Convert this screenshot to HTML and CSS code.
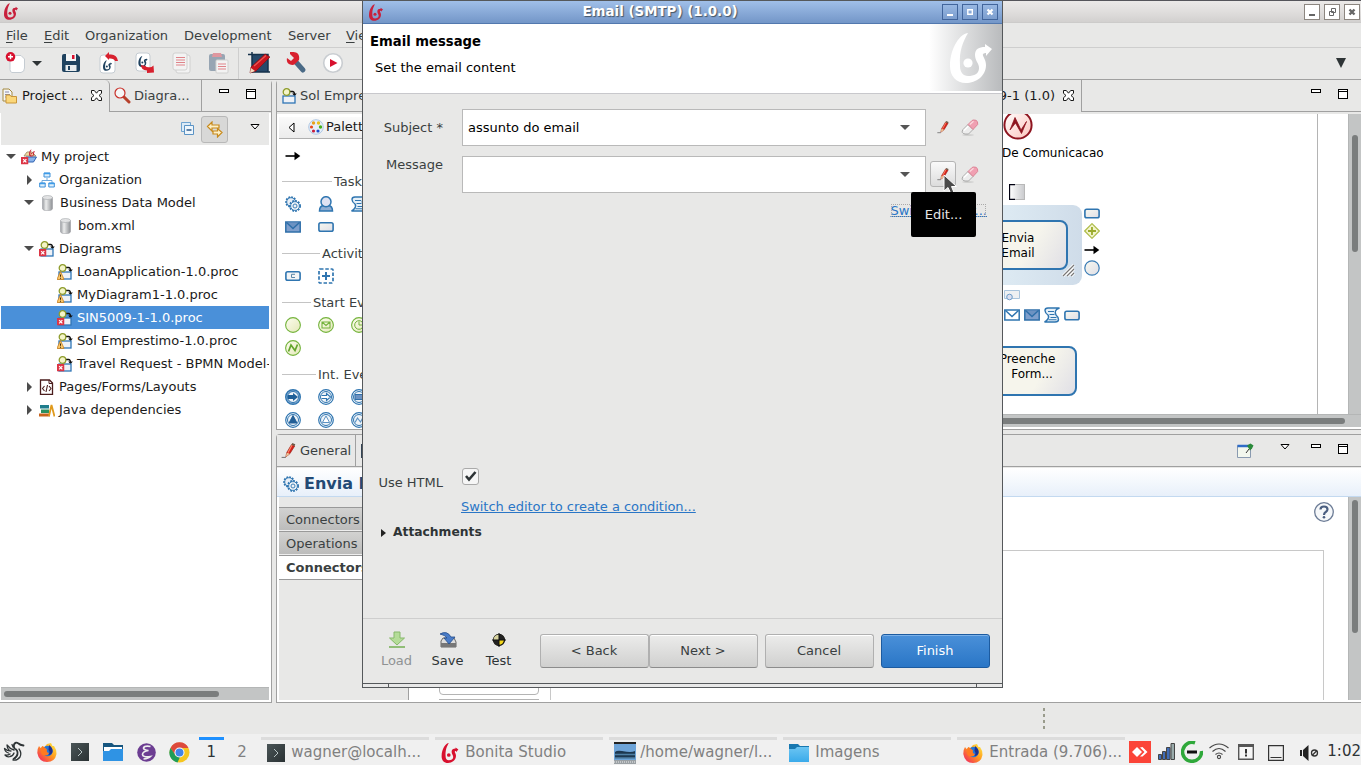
FILE: index.html
```html
<!DOCTYPE html>
<html lang="en">
<head>
<meta charset="utf-8">
<title>Bonita Studio</title>
<link rel="stylesheet" href="styles.css">
</head>
<body>
<svg class="defs" width="0" height="0">
  <defs>
    <linearGradient id="g-task" x1="0" y1="0" x2="1" y2="1"><stop offset="0" stop-color="#f8f8f0"/><stop offset="1" stop-color="#dedee6"/></linearGradient>
    <linearGradient id="g-green" x1="0" y1="0" x2="1" y2="1"><stop offset="0" stop-color="#fdfdf0"/><stop offset="1" stop-color="#e4e8b8"/></linearGradient>
    <linearGradient id="g-red" x1="0" y1="0" x2="1" y2="1"><stop offset="0" stop-color="#fff"/><stop offset="1" stop-color="#fbc4bc"/></linearGradient>
    <linearGradient id="g-cyl" x1="0" y1="0" x2="1" y2="0"><stop offset="0" stop-color="#9a9da1"/><stop offset=".35" stop-color="#eceded"/><stop offset="1" stop-color="#8d9094"/></linearGradient>
    <linearGradient id="g-term" x1="0" y1="0" x2="1" y2="1"><stop offset="0" stop-color="#4a5557"/><stop offset="1" stop-color="#2a3133"/></linearGradient>
    <linearGradient id="g-fox" x1="1" y1="0" x2="0" y2="1"><stop offset="0" stop-color="#fff44f"/><stop offset=".45" stop-color="#ff9a1c"/><stop offset="1" stop-color="#f0156a"/></linearGradient>
    <linearGradient id="g-folder" x1="0" y1="0" x2="0" y2="1"><stop offset="0" stop-color="#6cc5f2"/><stop offset="1" stop-color="#3aaaea"/></linearGradient>
  </defs>
  <symbol id="bonita" viewBox="0 0 42 50"><path fill="currentColor" d="M18 0C11 0 0 14 0 33c0 10 6 17 16 17s20-7 20-18c0-6-4-9-3-11 1-1 2-1 3-1v3l6-7-7-5v3c-6 0-10 2-10 8s4 8 4 13c0 6-5 8-11 8-5 0-8-4-8-10C9 17 13 9 18 0z"/><circle cx="18" cy="30" r="4.600" fill="currentColor"/></symbol>
  <symbol id="proc" viewBox="0 0 16 16"><path d="M9 3.500h2.500q2 0 2 3" fill="none" stroke="#111" stroke-width="1.300"/><path d="M11.200 5.500h4.600l-2.300 2.800z" fill="#111"/><rect x="2" y="8" width="12" height="7" fill="#eef1f6" stroke="#2f75b5" stroke-width="1.300"/><circle cx="5.500" cy="4" r="3.300" fill="#f4f4c8" stroke="#8d9b2a" stroke-width="1.300"/></symbol>
  <symbol id="err" viewBox="0 0 7 7"><rect width="7" height="7" fill="#dc3545"/><path d="M2 2l3 3M5 2l-3 3" stroke="#fff" stroke-width="1.200"/></symbol>
  <symbol id="warn" viewBox="0 0 7 8"><path d="M3.500.5L6.700 7.500H.3z" fill="#fbc96a" stroke="#c77a18" stroke-width=".7"/><path d="M3.500 3v2.200M3.500 6v.8" stroke="#3a2a10" stroke-width=".9"/></symbol>
  <symbol id="proc-err" viewBox="0 0 16 16"><use href="#proc" width="16" height="16"/><use href="#err" y="8" width="7.500" height="7.500"/></symbol>
  <symbol id="proc-warn" viewBox="0 0 16 16"><use href="#proc" width="16" height="16"/><use href="#warn" x="-.5" y="7" width="8" height="9"/></symbol>
  <symbol id="cyl" viewBox="0 0 16 16"><path d="M3 2.500v11c0 3 10 3 10 0v-11z" fill="url(#g-cyl)" stroke="#9da0a4" stroke-width=".6"/><ellipse cx="8" cy="2.500" rx="5" ry="2" fill="#e2e3e4" stroke="#a5a8ab" stroke-width=".6"/></symbol>
  <symbol id="gear" viewBox="0 0 16 16"><g fill="none" stroke="#2f75b0"><circle cx="6" cy="6" r="5" fill="#e9eff6" stroke-width="1.600" stroke-dasharray="1.800 1.100"/><circle cx="6" cy="6" r="4.300" stroke-width=".9"/><circle cx="10" cy="10" r="5.200" fill="#eef3f8" stroke-width="1.600" stroke-dasharray="1.800 1.200"/><circle cx="10" cy="10" r="4.400" stroke-width=".9"/><circle cx="10" cy="10" r="2" stroke-width=".9"/></g></symbol>
  <symbol id="user" viewBox="0 0 16 16"><path d="M1.500 15q0-5 4-5.500h5q4 .5 4 5.500z" fill="#8fadd2" stroke="#2f75b0" stroke-width="1.500"/><circle cx="8" cy="5.700" r="5" fill="#dfe2f2" stroke="#2f75b0" stroke-width="1.500"/></symbol>
  <symbol id="script" viewBox="0 0 16 16"><path d="M15.500 1H4Q1 1 1 3.500T4 8q1.500 2-.5 4.500-1 1.500-3 2.500H11q3.500 0 3.500-2.500T12 8Q9.500 3 15.500 1z" fill="#e6f0f8" stroke="#2f75b0" stroke-width="1.400"/><path d="M4 4.500h6M5.500 7.500h5M6.500 10.500h6M4.500 12.700h8" stroke="#2f75b0" stroke-width="1.100"/></symbol>
  <symbol id="mail-w" viewBox="0 0 16 12"><rect x=".8" y="1" width="14.400" height="10" fill="#fff" stroke="#2f75b0" stroke-width="1.500"/><path d="M1.500 1.500l6.500 6 6.500-6" fill="none" stroke="#2f75b0" stroke-width="1.500"/></symbol>
  <symbol id="mail-b" viewBox="0 0 16 12"><rect x=".8" y="1" width="14.400" height="10" fill="#7f9fcc" stroke="#2f6fa9" stroke-width="1.500"/><path d="M1.500 1.500l6.500 6 6.500-6" fill="#6c92c2" stroke="#2f6fa9" stroke-width="1.500"/></symbol>
  <symbol id="task" viewBox="0 0 16 11"><rect x=".9" y="1.200" width="14.200" height="8.500" rx="1.800" fill="url(#g-task)" stroke="#2f75b0" stroke-width="1.600"/></symbol>
  <symbol id="call" viewBox="0 0 16 11"><rect x=".9" y="1.200" width="14.200" height="8.500" rx="1.800" fill="#f2f4f6" stroke="#2f75b0" stroke-width="1.600"/><path d="M10 3.800H6.500v3.200H10" fill="none" stroke="#5b87a8"/></symbol>
  <symbol id="sub" viewBox="0 0 16 16"><rect x="1" y="1" width="14" height="14" rx="1" fill="#fff" stroke="#2f75b0" stroke-width="1.700" stroke-dasharray="3.500 1.800"/><path d="M8 4v8M4 8h8" stroke="#2f75b0" stroke-width="2"/></symbol>
  <symbol id="start" viewBox="0 0 16 16"><circle cx="8" cy="8" r="7.400" fill="url(#g-green)" stroke="#74b33c" stroke-width="1.100"/></symbol>
  <symbol id="start-mail" viewBox="0 0 16 16"><use href="#start"/><path d="M4 5h8v6H4zM4 5l4 3.500L12 5" fill="none" stroke="#74b33c" stroke-width="1.100"/></symbol>
  <symbol id="start-time" viewBox="0 0 16 16"><use href="#start"/><circle cx="8" cy="8" r="4.300" fill="none" stroke="#74b33c"/><path d="M8 4.500V8h4" fill="none" stroke="#74b33c"/></symbol>
  <symbol id="start-sig" viewBox="0 0 16 16"><use href="#start"/><path d="M3.500 11.500l2.500-6.500 4 5.500 2.500-6" fill="none" stroke="#63a52c" stroke-width="1.700"/></symbol>
  <symbol id="ring" viewBox="0 0 16 16"><circle cx="8" cy="8" r="7.300" fill="#fff" stroke="#2f75b0" stroke-width="1.200"/><circle cx="8" cy="8" r="5.500" fill="#eef3f8" stroke="#2f75b0"/></symbol>
  <symbol id="int-fill" viewBox="0 0 16 16"><circle cx="8" cy="8" r="7.300" fill="#8db0d2" stroke="#2f75b0" stroke-width="1.400"/><circle cx="8" cy="8" r="5.500" fill="#eef3f8" stroke="#2f75b0"/><path d="M3 6h5V4l5 4-5 4v-2H3z" fill="#1e5f98"/></symbol>
  <symbol id="int-line" viewBox="0 0 16 16"><use href="#ring"/><path d="M3.500 6.500h5v-2L12.500 8l-4 3.500v-2h-5" fill="#fff" stroke="#2f75b0" stroke-width="1.100"/></symbol>
  <symbol id="int-mail" viewBox="0 0 16 16"><use href="#ring"/><path d="M4 5.500h8v5H4z" fill="#6c92c2" stroke="#2f6fa9"/></symbol>
  <symbol id="int-tri" viewBox="0 0 16 16"><use href="#ring"/><path d="M8 3.500l4 7.500H4z" fill="#235f96" stroke="#235f96"/></symbol>
  <symbol id="int-tri2" viewBox="0 0 16 16"><use href="#ring"/><path d="M8 4l3.600 6.500H4.400z" fill="#fff" stroke="#5c92c2"/></symbol>
  <symbol id="int-sig" viewBox="0 0 16 16"><use href="#ring"/><path d="M4 10.500L6.500 6l3 4L12 5.500" fill="none" stroke="#5c92c2" stroke-width="1.200"/></symbol>
  <symbol id="arrow" viewBox="0 0 16 10"><path d="M.5 5h10" stroke="#000" stroke-width="1.600"/><path d="M9.500.8L15.300 5l-5.800 4.200z"/></symbol>
  <symbol id="xclose" viewBox="0 0 11 11"><path d="M.5.5h2.800l2.200 2.700L7.700.5h2.800v2.800L8 5.500l2.500 2.200v2.800H7.700L5.500 7.800l-2.200 2.700H.5V7.700L3 5.500.5 3.300z" fill="#fff" stroke="#000" stroke-width=".9"/></symbol>
  <symbol id="vmin" viewBox="0 0 10 4"><rect x=".5" y=".5" width="9" height="3" fill="#fff" stroke="#000"/></symbol>
  <symbol id="vmax" viewBox="0 0 10 10"><rect x=".5" y=".5" width="9" height="9" fill="#fff" stroke="#000"/><path d="M0 2.500h10" stroke="#000"/></symbol>
  <symbol id="vmenu" viewBox="0 0 10 6"><path d="M1 .5h8L5 5z" fill="#fff" stroke="#000"/></symbol>
  <symbol id="pencil" viewBox="0 0 16 16"><path d="M1.500 14.500h4" stroke="#777" stroke-width="1"/><path d="M5.500 14l.8-4L10.800 2.500l3 1.300L9.300 11z" fill="#d8201c" stroke="#8e1d12" stroke-width=".6"/><path d="M7.500 10l4-7.300" stroke="#ff8a68" stroke-width="1"/><path d="M5.500 14l.8-4 3 1z" fill="#ecc99a"/><path d="M10.800 2.500l.8-1.500 2.800 1.200-.7 1.600z" fill="#6e5a48"/></symbol>
  <symbol id="eraser" viewBox="0 0 18 17"><ellipse cx="7" cy="16" rx="6" ry=".8" fill="#c9c9c8"/><path d="M2 10.500L7 5.500l5 5-4.500 4.500H4Q-.5 14 2 10.500z" fill="#ededed" stroke="#999" stroke-width=".8"/><path d="M7 5.500l4-4q1-1 4-.2 2.200.9 1.700 4.200L12 10.500z" fill="#f0a0b2" stroke="#d8788c" stroke-width=".8"/><path d="M8.800 5.500L12.500 2.200" stroke="#fbd8de" stroke-width="1.300"/><path d="M3 11.500l4.200-4.200" stroke="#fff" stroke-width="1.500"/></symbol>
  <symbol id="fox" viewBox="0 0 20 20"><path d="M2 4l1.500 2L6 4l1 1.500L10 2l4-1 1.500 3L17 4q3 4 2.500 8-1.500 8-9.500 8T.3 11Q0 7 2 4z" fill="url(#g-fox)"/><circle cx="10.500" cy="9" r="5.200" fill="#2277d8"/><path d="M5 4q3 1 5 3.500-1 3 2 3.500-1 3-4.500 2.500T4 9.500z" fill="#ff7a20"/><path d="M12 3q4 3 3.500 7-1 3-4 3 2-3 0-5z" fill="#20308f"/></symbol>
  <symbol id="term" viewBox="0 0 18 18"><rect width="18" height="18" fill="url(#g-term)"/><path d="M7 5l4 4-4 4" fill="none" stroke="#b8c4c4"/></symbol>
</svg>

<div class="desktop">
  <div class="main-window">
    <div class="titlebar">
      <svg class="app-logo" width="14" height="17"><use href="#bonita"/></svg>
      <div class="win-buttons">
        <span class="wb"><svg width="14" height="14"><path d="M4 9h6v2H4z" fill="#666"/></svg></span>
        <span class="wb"><svg width="14" height="14" fill="none" stroke="#666"><path d="M6.500 3.500h4v4h-4zM4.500 6.500h4v4h-4z"/></svg></span>
        <span class="wb"><svg width="14" height="14"><path d="M4.500 4.500l5 5M9.500 4.500l-5 5" stroke="#666" stroke-width="2.400"/></svg></span>
      </div>
    </div>
    <div class="menubar"><span class="m1"><u>F</u>ile</span><span class="m2"><u>E</u>dit</span><span class="m3">Organization</span><span class="m4">Development</span><span class="m5">Server</span><span><u>V</u>ie</span></div>
    <div class="toolbar">
      <span class="tb-new"><svg width="22" height="22"><path d="M5 3.500h11l3.500 3.500v9q0 4-3.500 4.500H7q-2-.5-2-3z" fill="#fff" stroke="#c5ccd2"/><circle cx="5.500" cy="4.800" r="4.800" fill="#d8102e"/><path d="M5.500 2.300v5M3 4.800h5" stroke="#fff" stroke-width="1.500"/></svg><svg width="10" height="5"><path d="M0 0h10L5 5z" fill="#2e3436"/></svg></span>
      <span class="tb"><svg width="20" height="20"><path d="M1 3q0-2 2-2h13l3 3v13q0 2-2 2H3q-2 0-2-2z" fill="#1f425f"/><path d="M5 1h10v7H5z" fill="#f3f5f6"/><path d="M11 2h2.500v4H11z" fill="#d8102e"/><path d="M4.500 12h11v6h-11z" fill="#e8ecee"/><path d="M7 13h2v4H7z" fill="#1f425f"/></svg></span>
      <span class="tb"><svg width="22" height="22"><rect x="3" y="3" width="15" height="18" rx="3" fill="#fff" stroke="#c5ccd2"/><svg x="6" y="8" width="9" height="11" color="#1f425f"><use href="#bonita"/></svg><path d="M8 4l4-4v2.500q8-1 9 6.500h-3q-1-3-6-2.500V8z" fill="#d8202e"/></svg></span>
      <span class="tb"><svg width="22" height="22"><rect x="2" y="1" width="14" height="18" rx="3" fill="#fff" stroke="#c5ccd2"/><svg x="4" y="4" width="10" height="11" color="#1f425f"><use href="#bonita"/></svg><path d="M7 13q0 5 6 5.500V21l7-.5-.5-7-2 1.500q-5 1-6-1z" fill="#d8202e"/></svg></span>
      <span class="tb faded"><svg width="22" height="22"><rect x="5" y="3" width="14" height="18" rx="2" fill="#fff" stroke="#bbb"/><rect x="2" y="1" width="14" height="17" rx="2" fill="#fff" stroke="#bbb"/><path d="M5 5.500h9M5 8h9M5 10.500h9M5 13h9" stroke="#d8202e"/></svg></span>
      <span class="tb faded"><svg width="22" height="22"><rect x="1" y="2" width="16" height="17" rx="2" fill="#486580"/><path d="M5 1h8l1 4H4z" fill="#d8485a"/><rect x="8" y="8" width="12" height="13" rx="1" fill="#fff" stroke="#bbb"/><path d="M10 12h8M10 14.500h8M10 17h8" stroke="#d8202e"/></svg></span>
      <span class="tb-sep"></span>
      <span class="tb wide"><svg width="23" height="22"><path d="M4 2h16v18H4z" fill="#27496a"/><path d="M4 0v20h18M0 2.500h20v18" fill="none" stroke="#16324c" stroke-width="1.500"/><path d="M2 21l1-6L17 2l5 3L8 19z" fill="#c8141e" stroke="#7d0d12" stroke-width=".6"/><path d="M6 14L18 3.500" stroke="#ea5a54" stroke-width="1.200"/><path d="M2 21l1-5 4 3z" fill="#f1dcc0"/></svg></span>
      <span class="tb"><svg width="22" height="22"><path d="M10 9l8 9" stroke="#4a6a86" stroke-width="5" stroke-linecap="round"/><path d="M5 2l4 4-3 3-4-3q-1 5 3 6.500 3 1 5-.5l4-4q1-6-3-7.500-4-1-6-.5z" fill="#d8202e"/></svg></span>
      <span class="tb"><svg width="22" height="22"><circle cx="11" cy="11" r="9.300" fill="#fff" stroke="#c9cdd1" stroke-width="1.600"/><path d="M8 7v8l7.500-4z" fill="#d8102e"/></svg></span>
      <svg class="tb-more" width="10" height="10"><path d="M0 0h10L5 10z" fill="#2e3436"/></svg>
    </div>

    <div class="workbench">
      <section class="panel explorer">
        <div class="tabs">
          <div class="tab tab-project"><svg width="16" height="16"><path d="M2 1h6l3 3v9H2z" fill="#f4f6f8" stroke="#a58a40"/><path d="M4 4h4M4 6.500h5M4 9h3" stroke="#88a"/><path d="M5 7h4l1 1.500h5.500V15H5z" fill="#fbd77a" stroke="#c8963a"/></svg><span>Project ...</span><svg class="x" width="11" height="11"><use href="#xclose"/></svg></div>
          <div class="tab tab-search"><svg width="17" height="17"><path d="M9 9l6 6" stroke="#b7412c" stroke-width="3" stroke-linecap="round"/><circle cx="6" cy="6" r="5" fill="#f5f6f6" stroke="#c8312a" stroke-width="1.200"/></svg><span>Diagra...</span></div>
          <div class="tab-rest"><svg width="10" height="4"><use href="#vmin"/></svg><svg width="10" height="10"><use href="#vmax"/></svg></div>
        </div>
        <div class="view-tools">
          <svg width="14" height="14"><path d="M.5.5h9v9h-9z" fill="#dcebf7" stroke="#6ea3d0"/><path d="M3.500 3.500h9v9h-9z" fill="#eef6fc" stroke="#5b93c4"/><path d="M5.500 8h5" stroke="#1d4f86" stroke-width="1.400"/></svg>
          <span class="toggle"><svg width="18" height="17"><path d="M1.500 5.500L6 1v3h7v3H6v3zM16 11.500L11.500 7.500v2.500H7v3h4.500v3z" fill="#fdf0c8" stroke="#c88a1c" stroke-width="1.200"/></svg></span>
          <svg class="vm" width="10" height="6"><use href="#vmenu"/></svg>
        </div>
        <div class="tree">
          <div class="row"><i class="open"></i><svg width="16" height="16"><path d="M3 7l3-4h5l4 4z" fill="#f2d6a0" stroke="#a97"/><path d="M5 8h10.500l-3 5H4z" fill="#8ab4ec" stroke="#2f62b0"/><svg x="8" y="0" width="6" height="8" color="#c8243a"><use href="#bonita"/></svg><use href="#err" y="8" width="7.500" height="7.500"/></svg><span>My project</span></div>
          <div class="row l1"><i class="shut"></i><svg width="16" height="16"><path d="M8 6v3M3 11V8.500h10V11" fill="none" stroke="#6fa8dc"/><g fill="#dff0fc" stroke="#3d8fd8"><path d="M5 1h6v4H5zM.700 11h5.500v4H.7zM9.800 11h5.500v4H9.800z"/></g><path d="M5 1.500h6M.7 11.500h5.500M9.800 11.500h5.500" stroke="#3d9be8" stroke-width="1.500"/></svg><span>Organization</span></div>
          <div class="row l1"><i class="open"></i><svg width="17" height="16"><use href="#cyl"/></svg><span>Business Data Model</span></div>
          <div class="row l2"><i></i><svg width="17" height="16"><use href="#cyl"/></svg><span>bom.xml</span></div>
          <div class="row l1"><i class="open"></i><svg width="16" height="16"><use href="#proc-err"/></svg><span>Diagrams</span></div>
          <div class="row l2"><i></i><svg width="16" height="16"><use href="#proc-warn"/></svg><span>LoanApplication-1.0.proc</span></div>
          <div class="row l2"><i></i><svg width="16" height="16"><use href="#proc-warn"/></svg><span>MyDiagram1-1.0.proc</span></div>
          <div class="row l2 selected"><i></i><svg width="16" height="16"><use href="#proc-err"/></svg><span>SIN5009-1-1.0.proc</span></div>
          <div class="row l2"><i></i><svg width="16" height="16"><use href="#proc-warn"/></svg><span>Sol Emprestimo-1.0.proc</span></div>
          <div class="row l2"><i></i><svg width="16" height="16"><use href="#proc-err"/></svg><span>Travel Request - BPMN Model-</span></div>
          <div class="row l1"><i class="shut"></i><svg width="16" height="16"><path d="M1.500 1h9l3 3v11.500h-12z" fill="#fff" stroke="#4a1c1c" stroke-width="1.300"/><path d="M10 1v3.500h4" fill="none" stroke="#4a1c1c"/><path d="M5.500 7L3.500 9.500l2 2.500M10 7l2 2.500-2 2.500M8.500 6L7 13" fill="none" stroke="#4a1c1c" stroke-width="1.100"/></svg><span>Pages/Forms/Layouts</span></div>
          <div class="row l1"><i class="shut"></i><svg width="16" height="16"><path d="M1 3h9v3.500H1z" fill="#1f7d8c"/><path d="M2 7.500h8V11H2z" fill="#2a8f5f"/><path d="M0 11.500h11v3H0z" fill="#c8641e"/><path d="M10 14l2.500-11 3 11.500" fill="none" stroke="#e09a1c" stroke-width="1.800"/></svg><span>Java dependencies</span></div>
        </div>
        <div class="hscroll"><b></b></div>
      </section>

      <div class="right-col">
        <section class="panel editor">
          <div class="tabs">
            <div class="tab tab-sol"><svg width="16" height="16"><use href="#proc"/></svg><span>Sol Empre</span></div>
            <div class="tab tab-active"><span>SIN5009-1 (1.0)</span><svg class="x" width="11" height="11"><use href="#xclose"/></svg></div>
            <div class="tab-rest"><svg width="10" height="4"><use href="#vmin"/></svg><svg width="10" height="10"><use href="#vmax"/></svg></div>
          </div>
          <div class="editor-body">
            <div class="palette">
              <div class="pal-head"><span class="back"><svg width="7" height="11"><path d="M6 1v9L1 5.500z" fill="#fff" stroke="#000"/></svg></span><svg width="16" height="16"><circle cx="8" cy="8" r="7.300" fill="#e6effa" stroke="#b0c8e4"/><circle cx="5.500" cy="4" r="1.700" fill="#e8a21c"/><circle cx="10.500" cy="4" r="1.700" fill="#e8c01c"/><circle cx="3.500" cy="8" r="1.600" fill="#e84a1c"/><circle cx="12.500" cy="8" r="1.700" fill="#45b01c"/><circle cx="5.500" cy="12" r="1.600" fill="#c81c3a"/><circle cx="10" cy="12" r="1.600" fill="#1c4ac8"/></svg><span>Palette</span></div>
              <div class="pal-arrow"><svg width="16" height="10"><use href="#arrow"/></svg></div>
              <div class="pal-group g-tasks">Tasks</div>
              <div class="pal-items"><svg><use href="#gear"/></svg><svg><use href="#user"/></svg><svg><use href="#script"/></svg><svg><use href="#mail-b"/></svg><svg><use href="#task"/></svg></div>
              <div class="pal-group g-act">Activities</div>
              <div class="pal-items"><svg><use href="#call"/></svg><svg><use href="#sub"/></svg></div>
              <div class="pal-group g-start">Start Events</div>
              <div class="pal-items"><svg><use href="#start"/></svg><svg><use href="#start-mail"/></svg><svg><use href="#start-time"/></svg><svg><use href="#start-sig"/></svg></div>
              <div class="pal-group g-int">Int. Events</div>
              <div class="pal-items"><svg><use href="#int-fill"/></svg><svg><use href="#int-line"/></svg><svg><use href="#int-mail"/></svg><svg><use href="#int-tri"/></svg><svg><use href="#int-tri2"/></svg><svg><use href="#int-sig"/></svg></div>
            </div>
            <div class="diagram">
              <div class="diagram-row">
                <div class="canvas">
                  <svg class="node n-event" width="30" height="30"><circle cx="15" cy="15" r="13.600" fill="url(#g-red)" stroke="#8e1520" stroke-width="2"/><path d="M7 20l5-12.500L18 20l5.500-8.500-5 12L12.500 13z" fill="#8e1520" stroke="#8e1520" stroke-width=".8"/></svg>
                  <span class="node n-com">De Comunicacao</span>
                  <svg class="node n-note" width="16" height="16"><defs><linearGradient id="g-note"><stop offset="0" stop-color="#fff"/><stop offset="1" stop-color="#c9cacd"/></linearGradient></defs><rect width="15" height="15" x=".5" y=".5" fill="url(#g-note)" stroke="#b8b8b8"/><path d="M6 .500H.5v15H6" fill="none" stroke="#001" stroke-width="1.300"/></svg>
                  <div class="node n-halo"></div>
                  <div class="node n-task n-envia">Envia<br>Email</div>
                  <svg class="node n-grip" width="13" height="13"><path d="M1 12L12 1M5 12l7-7M9 12l3-3" stroke="#fff" stroke-width="3"/><path d="M1 12L12 1M5 12l7-7M9 12l3-3" stroke="#777" stroke-width="1.200"/></svg>
                  <svg class="node n-q1" width="16" height="11"><use href="#task"/></svg>
                  <svg class="node n-q2" width="16" height="16"><path d="M8 .7L15.300 8 8 15.300.7 8z" fill="#f2f4cc" stroke="#aebc48" stroke-width="1.200"/><path d="M8 4v8M4 8h8" stroke="#9bab2c" stroke-width="1.800"/></svg>
                  <svg class="node n-q3" width="16" height="10"><use href="#arrow"/></svg>
                  <svg class="node n-q4" width="16" height="16"><circle cx="8" cy="8" r="7.200" fill="url(#g-task)" stroke="#3a7cb5" stroke-width="1.200"/></svg>
                  <svg class="node n-q5" width="16" height="11"><path d="M.5.500h15v8H.5z" fill="#eef0f2" stroke="#a9c4dc"/><circle cx="5.500" cy="7" r="2.800" fill="#dcdff0" stroke="#6c9cc8"/></svg>
                  <svg class="node n-q6" width="16" height="12"><use href="#mail-w"/></svg>
                  <svg class="node n-q7" width="16" height="12"><use href="#mail-b"/></svg>
                  <svg class="node n-q8" width="16" height="16"><use href="#script"/></svg>
                  <svg class="node n-q9" width="16" height="11"><use href="#task"/></svg>
                  <div class="node n-task n-form"><span>Preenche</span><br>Form...</div>
                  <div class="node n-lane"></div>
                </div>
                <div class="vscroll"><b></b></div>
              </div>
              <div class="hscroll"><b></b></div>
            </div>
          </div>
        </section>

        <section class="panel props">
          <div class="tabs">
            <div class="tab tab-general"><svg width="17" height="17"><use href="#pencil"/></svg><span>General</span></div>
            <div class="tab tab-next"><i></i></div>
            <div class="tab-rest"><svg class="pin" width="17" height="16"><path d="M.5 2.500h13v12H.5z" fill="#f3f7ee" stroke="#8a9ab0"/><path d="M.5 3h13" stroke="#2f6cc8" stroke-width="2.500"/><path d="M9 10l3-4" stroke="#333"/><path d="M10 2.500l3 5 2-2 1.500-3-3-2z" fill="#2a8a3a"/></svg><svg width="10" height="6"><use href="#vmenu"/></svg><svg width="10" height="4"><use href="#vmin"/></svg><svg width="10" height="10"><use href="#vmax"/></svg></div>
          </div>
          <div class="prop-head"><svg width="16" height="16"><use href="#gear"/></svg><span>Envia Email</span></div>
          <div class="prop-body">
            <nav class="prop-nav"><a>Connectors in</a><a>Operations</a><a class="on">Connectors out</a></nav>
            <div class="prop-main">
              <div class="prop-buttons"><span></span><hr></div>
              <div class="prop-list"></div>
              <svg class="help" width="20" height="20"><circle cx="10" cy="10" r="9.300" fill="#f6f8fa" stroke="#6c7c96" stroke-width="1.300"/><path d="M6.500 7.500q0-3 3.500-3t3.500 2.800q0 1.500-1.800 2.700-1.700 1-1.700 3" fill="none" stroke="#4a5e80" stroke-width="2.200"/><circle cx="10" cy="15.300" r="1.300" fill="#4a5e80"/></svg>
            </div>
            <div class="vscroll"><b></b></div>
          </div>
        </section>
      </div>
    </div>
    <div class="statusbar"><i></i></div>
  </div>

  <footer class="taskbar">
    <div class="launch">
      <svg width="22" height="22" fill="none" stroke="#2e3436" stroke-linecap="round" stroke-linejoin="round"><path d="M20.500 4.500Q17 4 15.500 2.500q-3-2-4.500 1-.5 2 .5 4Q15 9 14.500 13q-.5 3-4 5" stroke-width="1.800"/><path d="M10 6L9 3.500M11 9Q7 8 4 4q0 3 2 5M8 10Q4 10 1.500 7.500 2 11 5.500 12M7 13q-2 1.500-5 1 2 2.500 5 1.500 3-.5 4-3.500M10 19q4 1 7-3 2-4-1-8" stroke-width="1.300"/></svg>
      <svg width="20" height="20"><use href="#fox"/></svg>
      <svg width="18" height="18"><use href="#term"/></svg>
      <svg width="20" height="18"><path d="M0 0h9l2 2h9v7H0z" fill="#17567f"/><path d="M1 4h18v5H1z" fill="#fff"/><path d="M0 8h6l2-2h12v12H0z" fill="#2f93e4"/></svg>
      <svg width="19" height="19"><circle cx="9.500" cy="9.500" r="9.300" fill="#6c3d92"/><path d="M13.500 3.500q-6-1-7 1.500 0 2 5 2.500-6 1-6 4t8 2q-2 2-7 2.500" fill="none" stroke="#eee" stroke-width="1.700"/></svg>
      <svg width="21" height="21"><circle cx="10.500" cy="10.500" r="10" fill="#f6c620"/><path d="M1.500 6A10 10 0 0 1 19.500 6h-9L6 13z" fill="#dd4a3c"/><path d="M1.500 6L7 14l4 1-2.500 5.500A10 10 0 0 1 1.500 6z" fill="#1f9d58"/><circle cx="10.500" cy="10.500" r="5" fill="#fff"/><circle cx="10.500" cy="10.500" r="4" fill="#4285e8"/></svg>
    </div>
    <span class="ws ws-on">1</span><span class="ws">2</span>
    <div class="tasks">
      <div class="t"><svg width="18" height="18"><use href="#term"/></svg><span>wagner@localh...</span></div>
      <div class="t"><svg width="18" height="20" color="#d8102e"><use href="#bonita"/></svg><span>Bonita Studio</span></div>
      <div class="t t-img"><svg width="22" height="22"><path d="M0 0h22v22H0z" fill="#6ea4d8"/><path d="M0 0h22v2H0z" fill="#222"/><path d="M1 10q2-2 7-1t8 1 5-1v7H1z" fill="#1d3850"/><path d="M1 12.500h20M1 16h20" stroke="#4f7fa4" stroke-width="1.500"/><path d="M0 18h22v4H0z" fill="#9aa0a4"/><path d="M0 20h22" stroke="#eee" stroke-dasharray="1 1"/></svg><span>/home/wagner/l...</span></div>
      <div class="t"><svg width="20" height="18"><path d="M0 0h9l2 2h9v6H0z" fill="#1878b0"/><path d="M0 5h6l2-2h12v15H0z" fill="url(#g-folder)"/></svg><span>Imagens</span></div>
      <div class="t"><svg width="20" height="20"><use href="#fox"/></svg><span>Entrada (9.706)...</span></div>
    </div>
    <div class="tray">
      <svg width="22" height="22"><path d="M0 0h22v22H0z" fill="#fb4438"/><path d="M8 6l5 5-5 5-5-5z" fill="#fff"/><path d="M11 6.500l4.500 4.500-4.500 4.500h2.500L18.500 11l-5-5z" fill="#fff"/></svg>
      <svg class="s-bars" width="17" height="18"><g fill="#3f6cb8" stroke="#444"><path d="M.5 11.500h3v5h-3zM4.500 8.500h3v8h-3zM8.500 4.500h3.500v12H8.500z"/><path d="M13 .5h3.500v16H13z" fill="#9aa"/></g></svg>
      <svg class="s-ring" width="22" height="22"><path d="M14 1.800A9.500 9.500 0 1 0 20.500 10" fill="none" stroke="#2fa83a" stroke-width="3.500"/><path d="M6 9.500h10v3H6z" fill="#111"/></svg>
      <svg class="s-wifi" width="20" height="17" fill="none" stroke="#444" stroke-width="1.100"><path d="M.5 5q9.500-8 19 0M3.500 8.500q6.500-6 13 0M6.500 11.500q3.500-3 7 0"/><circle cx="10" cy="14" r="1.600"/></svg>
      <svg class="s-note" width="16" height="16"><path d="M.7.700h14.600v14.600H.7z" fill="#f6f6f6" stroke="#555" stroke-width="1.400"/><path d="M0 0h16v3H0z" fill="#555"/><path d="M8 5v4.500M8 10.500v2" stroke="#333" stroke-width="2"/></svg>
      <svg class="s-disp" width="16" height="16"><path d="M.6.600h14.800v14.800H.6z" fill="none" stroke="#333" stroke-width="1.200"/><path d="M2.500 12.500h11" stroke="#333"/></svg>
      <svg class="s-vol" width="20" height="16"><path d="M0 5h2v6H0zM3 5l5.500-5v16L3 11z" fill="#222"/><circle cx="14.500" cy="8" r="3" fill="none" stroke="#333" stroke-width="1.300"/><path d="M12 10.500l5-5" stroke="#333" stroke-width="1.200"/></svg>
      <span class="clock">1:02</span>
    </div>
  </footer>

  <div class="dialog">
    <div class="dlg-title">
      <svg class="app-logo" width="14" height="17"><use href="#bonita"/></svg>
      <span>Email (SMTP) (1.0.0)</span>
      <div class="win-buttons">
        <span class="wb"><svg width="14" height="14"><path d="M4 9h6v2H4z" fill="#fff"/></svg></span>
        <span class="wb"><svg width="14" height="14"><path d="M4.800 4.800h4.500v4.500H4.800z" fill="none" stroke="#fff" stroke-width="1.400"/></svg></span>
        <span class="wb"><svg width="14" height="14"><path d="M4.500 4.500l5 5M9.500 4.500l-5 5" stroke="#fff" stroke-width="2.200"/></svg></span>
      </div>
    </div>
    <div class="dlg-head">
      <div><h1>Email message</h1><p>Set the email content</p></div>
      <div class="banner"><svg width="42" height="50"><use href="#bonita"/></svg></div>
    </div>
    <div class="dlg-body">
      <div class="field f-subject"><label>Subject *</label><div class="combo"><span>assunto do email</span><svg width="10" height="5"><path d="M0 0h10L5 5z" fill="#555"/></svg></div><span class="ibtn"><svg width="14" height="14"><use href="#pencil"/></svg></span><svg class="er" width="18" height="17"><use href="#eraser"/></svg></div>
      <div class="field f-message"><label>Message</label><div class="combo"><span></span><svg width="10" height="5"><path d="M0 0h10L5 5z" fill="#555"/></svg></div><span class="ibtn raised"><svg width="14" height="14"><use href="#pencil"/></svg></span><svg class="er" width="18" height="17"><use href="#eraser"/></svg></div>
      <div class="switch-link"><a>Switch editor...</a></div>
      <div class="html-row"><label>Use HTML</label><span class="check"><svg width="14" height="14"><path d="M3 7l3 3.500L12.500 3" fill="none" stroke="#2e3436" stroke-width="2.600"/></svg></span></div>
      <a class="cond-link">Switch editor to create a condition...</a>
      <div class="attach"><i></i><b>Attachments</b></div>
    </div>
    <div class="dlg-foot">
      <div class="tool off"><svg width="18" height="18"><path d="M6 1h6v6h4.500L9 14 1.500 7H6z" fill="#b4dc98" stroke="#86b86a"/><path d="M1 16h16" stroke="#86b86a" stroke-width="1.800"/></svg>Load</div>
      <div class="tool"><svg width="18" height="18"><path d="M2 10l2-3h11l2 4v5H2z" fill="#ddd" stroke="#666"/><path d="M2 12h15v4H2z" fill="#777"/><path d="M1 3q7-4 11 3h4l-6 7-5-6h3q-2-3-7-4z" fill="#4a7cc8" stroke="#234d8c" stroke-width=".8"/></svg>Save</div>
      <div class="tool"><svg width="18" height="18"><circle cx="9" cy="9" r="5.500" fill="#f4d81c" stroke="#111" stroke-width="1.300"/><path d="M9 9h5.500A5.500 5.500 0 0 0 9 3.500zM9 9H3.500A5.500 5.500 0 0 0 9 14.500z" fill="#222"/><path d="M9 9V3.500A5.500 5.500 0 0 0 3.500 9z" fill="#d8d4a0"/><path d="M9 2v14M2 9h14" stroke="#111"/></svg>Test</div>
      <div class="btns"><button>&lt; Back</button><button>Next &gt;</button><button class="gap">Cancel</button><button class="gap primary">Finish</button></div>
    </div>
    <div class="dlg-grip"><i></i><i></i><i></i></div>
    <svg class="cursor" width="14" height="21"><path d="M1 1v16l4-3.500 3 6.500 3-1.500-2.500-6h5z" fill="#4b4b4b" stroke="#fff" stroke-width="1"/></svg>
    <div class="tooltip">Edit...</div>
  </div>
</div>
</body>
</html>
```
FILE: styles.css
```css
* { box-sizing: border-box; }
body { margin: 0; font: 13px/23px "DejaVu Sans", sans-serif; color: #1a1a1a; overflow: hidden; white-space: nowrap; }
svg { display: block; flex: none; }
.defs { position: absolute; }
.desktop { position: relative; width: 1361px; height: 765px; display: flex; flex-direction: column; overflow: hidden; }
.main-window { height: 734px; background: #e8e8e7; border-top: 1px solid #55555b; display: flex; flex-direction: column; }

.titlebar { height: 22px; display: flex; align-items: center; padding: 0 1px 0 4px; background: linear-gradient(#ebe9e8, #e0dedd 50%, #d2d0cf); border-bottom: 1px solid #cccbca; }
.app-logo { color: #c8203c; }
.win-buttons { margin-left: auto; display: flex; gap: 4px; }
.wb { width: 16px; height: 16px; border: 1px solid #8c8680; background: #fff; }

.menubar { height: 25px; display: flex; padding-left: 6px; color: #3a3f41; border-bottom: 1px solid #cecece; line-height: 25px; }
.menubar u { text-underline-offset: 2px; }
.m1 { width: 38px; } .m2 { width: 41px; } .m3 { width: 99px; } .m4 { width: 104px; } .m5 { width: 58px; }

.toolbar { height: 32px; display: flex; align-items: center; border-bottom: 1px solid #a0a0a0; padding: 0 15px 1px 0; }
.tb-new { width: 52px; padding-left: 5px; display: flex; align-items: center; gap: 5px; }
.tb { width: 37px; display: flex; justify-content: center; }
.tb.wide { width: 40px; }
.wide + .tb { margin-left: -2px; }
.faded { opacity: .5; }
.tb-sep { width: 1px; height: 31px; margin-left: 1px; background: #cecece; }
.tb-more { margin-left: auto; }

.workbench { height: 623px; display: flex; gap: 4px; }
.panel { display: flex; flex-direction: column; border: 1px solid #a0a0a0; background: #fff; }
.explorer { width: 272px; height: 623px; border-left: 0; border-top: 0; border-top-right-radius: 4px; }
.tabs { height: 33px; flex: none; display: flex; background: #e8e8e7; }
.tab { display: flex; align-items: center; border-bottom: 1px solid #a0a0a0; color: #3a3f41; height: 32px; }
.tab-project { width: 110px; padding: 0 0 1px 1px; gap: 5px; border-right: 1px solid #a0a0a0; border-bottom: 0; border-top-right-radius: 5px; color: #1a1a1a; }
.tab-project .x { margin-left: 3px; }
.tab-search { width: 92px; padding-left: 4px; gap: 3px; border-right: 1px solid #a0a0a0; }
.tab-rest { flex: 1; height: 32px; border-bottom: 1px solid #a0a0a0; display: flex; padding: 9px 15px 0 0; justify-content: flex-end; gap: 17px; }

.view-tools { height: 32px; margin: 0 2px 0 1px; background: #e8e8e7; display: flex; align-items: center; justify-content: flex-end; padding-right: 9px; gap: 6px; }
.toggle { width: 27px; height: 27px; border: 1px solid #b8b8b8; border-radius: 3px; background: #d8d8d7; display: grid; place-items: center; margin-right: 16px; }
.view-tools .vm { margin-bottom: 5px; }
.tree { flex: 1; margin: 0 2px 0 1px; overflow: hidden; }
.row { height: 23px; display: flex; align-items: center; padding-left: 5px; overflow: hidden; }
.row i { width: 10px; flex: none; margin-right: 5px; display: flex; justify-content: center; }
.row svg { margin-right: 4px; }
.row.l1 { padding-left: 23px; }
.row.l2 { padding-left: 41px; }
.row.selected { background: #4a90d9; color: #fff; }
.open::before { content: ""; border: 5px solid transparent; border-top-color: #4c4c4c; border-bottom: 0; }
.shut::before { content: ""; border: 5px solid transparent; border-left-color: #4c4c4c; border-right: 0; }
.hscroll { height: 13px; flex: none; background: #c3c5c5; border-top: 1px solid #b4b6b6; padding: 3px; }
.hscroll b, .vscroll b { display: block; background: #7a7d7d; border-radius: 3px; }
.hscroll b { height: 6px; }
.explorer .hscroll { margin: 0 2px 2px 1px; }
.explorer .hscroll b { width: 215px; }
.vscroll { width: 13px; background: #c3c5c5; border-left: 1px solid #b4b6b6; padding: 3px; }
.vscroll b { width: 6px; }

.right-col { flex: 1; display: flex; flex-direction: column; gap: 4px; }
.editor { height: 350px; border-right: 0; border-top: 0; border-top-left-radius: 4px; }
.editor .tabs { height: 34px; }
.editor .tab-rest, .props .tab-rest { padding-right: 13px; }
.tab-sol { width: 200px; padding-left: 4px; gap: 3px; }
.tab-active { width: 605px; justify-content: flex-end; padding: 0 7px 1px 0; gap: 8px; border-right: 1px solid #a0a0a0; border-bottom: 0; color: #1a1a1a; }
.editor-body { flex: 1; min-height: 0; display: flex; }
.palette { width: 133px; overflow: hidden; padding: 3px 0 0 2px; }
.pal-head { height: 22px; line-height: 20px; display: flex; align-items: center; border-bottom: 1px solid #b0b0b0; background: linear-gradient(#fafafa, #ececec); gap: 2px; padding-bottom: 1px; }
.back { width: 27px; padding-right: 2px; display: grid; place-items: center; }
.pal-arrow { padding: 12px 0 10px 6px; }
.pal-group { height: 21px; line-height: 21px; color: #3a3f41; display: flex; align-items: center; padding-left: 3px; }
.pal-group::before { content: ""; height: 1px; background: #c4c4c4; width: 50px; margin-right: 2px; }
.g-act::before { width: 38px; } .g-start::before { width: 29px; } .g-int::before { width: 34px; }
.pal-items { display: grid; grid-template-columns: 33px 33px 33px; grid-auto-rows: 23px; padding-left: 6px; margin-bottom: 5px; align-items: center; }
.pal-items svg { width: 16px; height: 16px; }
.diagram { flex: 1; display: flex; flex-direction: column; }
.diagram-row { flex: 1; min-height: 0; display: flex; }
.canvas { flex: 1; position: relative; overflow: hidden; }
.node { position: absolute; }
.n-lane { left: 907px; top: 0; width: 1px; height: 301px; background: #b4b4b4; }
.n-event { left: 593px; top: -4px; }
.n-com { left: 592px; top: 28px; font-size: 12px; color: #000; }
.n-note { left: 599px; top: 70px; }
.n-halo { left: 500px; top: 91px; width: 172px; height: 80px; border-radius: 9px; background: linear-gradient(90deg, #dce9f2 58%, #cfdce9); }
.n-task { border: 2px solid #2f75b0; border-radius: 8px; background: linear-gradient(120deg, #f6f5ec 60%, #e0dfe6); color: #000; font-size: 12px; line-height: 15px; text-align: center; }
.n-envia { left: 558px; top: 106px; width: 100px; height: 50px; padding-top: 9px; }
.n-form { left: 577px; top: 232px; width: 90px; height: 50px; padding-top: 4px; }
.n-form span { margin-right: 9px; }
.n-grip { left: 652px; top: 150px; }
.n-q1 { left: 674px; top: 94px; } .n-q2 { left: 674px; top: 109px; } .n-q3 { left: 674px; top: 131px; } .n-q4 { left: 674px; top: 146px; }
.n-q5 { left: 594px; top: 176px; } .n-q6 { left: 594px; top: 195px; } .n-q7 { left: 614px; top: 195px; } .n-q8 { left: 634px; top: 193px; } .n-q9 { left: 654px; top: 196px; }
.editor .vscroll { padding-top: 21px; }
.editor .vscroll b { height: 117px; }
.editor .hscroll { margin-bottom: 2px; }
.editor .hscroll b { width: 932px; }

.props { height: 269px; border-right: 0; border-top-left-radius: 4px; }
.tab-general { width: 79px; padding-left: 3px; gap: 3px; border-right: 1px solid #a0a0a0; }
.tab-next { width: 80px; padding-left: 5px; }
.tab-next i { width: 16px; height: 14px; background: #345; }
.tab-rest .pin { margin: -1px 9px 0 0; }
.props .tab-rest > :nth-child(2) { margin-right: 4px; }
.prop-head { height: 30px; display: flex; align-items: center; gap: 5px; padding: 3px 0 0 6px; background: linear-gradient(#fff, #e8f0fa); border-bottom: 1px solid #c3d9f0; color: #234a75; font-size: 16px; font-weight: bold; }
.prop-body { flex: 1; display: flex; padding: 0 0 2px 2px; }
.prop-nav { width: 130px; border-right: 1px solid #a0a0a0; background: #e8e8e7; padding-top: 10px; display: flex; flex-direction: column; }
.prop-nav a { height: 24px; padding-left: 7px; line-height: 23px; background: linear-gradient(#d2d2d1, #bcbcbb); border-top: 1px solid #999; border-bottom: 1px solid #eee; word-spacing: 3px; color: #3a3f41; }
.prop-nav .on { background: #fff; font-weight: bold; border-bottom: 1px solid #999; height: 25px; }
.prop-main { flex: 1; display: flex; align-items: flex-start; }
.prop-buttons { width: 141px; height: 203px; padding: 0 11px 0 30px; display: flex; flex-direction: column; justify-content: flex-end; }
.prop-buttons span { height: 35px; border: 1px solid #b4b4b4; border-radius: 4px; }
.prop-buttons hr { width: 100%; border: 0; border-top: 1px solid #b4b4b4; margin: 4px 0 0; }
.prop-list { flex: 1; height: 150px; align-self: flex-end; border: 1px solid #c8c8c8; border-bottom: 0; }
.help { margin: 5px 14px 0 -10px; }
.props .vscroll b { height: 133px; }

.statusbar { height: 31px; padding: 5px 0 0 1043px; }
.statusbar i { display: block; width: 2px; height: 23px; background: repeating-linear-gradient(#999b8c 0 3px, transparent 3px 6px); }

.taskbar { height: 31px; background: #f0f0f0; display: flex; font-size: 15px; line-height: 29px; color: #808080; }
.launch { width: 199px; display: grid; grid-template-columns: repeat(6, 33.200px); place-items: center; padding: 5px 0 0; margin-left: -3px; }
.launch + .ws { margin-left: 3px; }
.ws { width: 25px; text-align: center; padding-top: 4px; margin-right: 6px; }
.ws-on { background: linear-gradient(#1e90ff, #1e90ff) 0 3px / 100% 3px no-repeat; color: #2e3436; }
.tasks { display: flex; gap: 6px; flex: none; margin-left: 1px; }
.t { width: 168px; padding: 6px 0 0 6px; display: flex; gap: 6px; align-items: center; background: linear-gradient(#dcdcdc, #dcdcdc) 0 3px / 100% 3px no-repeat; }
.t-img { padding-left: 5px; gap: 4px; }
.tray { display: flex; align-items: center; padding: 4px 0 0 4px; flex: none; }
.s-bars { margin-left: 7px; } .s-ring { margin-left: 6px; } .s-wifi { margin-left: 6px; } .s-note { margin-left: 9px; } .s-disp { margin: 3px 0 0 14px; } .s-vol { margin: 3px 0 0 16px; }
.clock { color: #2e3436; margin-left: 7px; }

.dialog { position: absolute; left: 362px; top: 0; width: 641px; height: 688px; border: 1px solid #55585b; background: #e8e8e7; display: flex; flex-direction: column; }
.dlg-title { height: 23px; display: flex; align-items: center; padding: 0 4px 0 6px; background: linear-gradient(#a0bfe9, #7396c8); border-bottom: 1px solid #5278ae; }
.dlg-title > span { flex: 1; text-align: center; color: #fff; font-size: 13.400px; font-weight: bold; text-shadow: 1px 1px 1px #456; padding: 0 5px 2px 0; }
.dialog .wb { background: none; border-color: #41659c; }
.dlg-head { height: 70px; background: #fff; border-bottom: 1px solid #c8c8cc; display: flex; justify-content: space-between; color: #000; }
.dlg-head h1 { margin: 6px 0 0 7px; font-size: 13.200px; line-height: 23px; }
.dlg-head p { margin: 3px 0 0 12px; }
.banner { width: 73px; height: 67px; padding: 9px 0 0 21px; color: #fff; background: linear-gradient(90deg, #fff, #b9bbbd); }
.dlg-body { height: 524px; padding-top: 15px; color: #3a3f41; }
.field { height: 37px; display: flex; align-items: center; margin-bottom: 10px; }
.field label { width: 99px; padding-right: 19px; text-align: right; }
.f-message label { align-self: flex-start; margin-top: -3px; }
.combo { width: 464px; height: 37px; background: #fff; border: 1px solid #b9b9b9; display: flex; align-items: center; justify-content: space-between; padding: 0 15px 0 5px; color: #000; }
.combo svg { margin-bottom: 1px; }
.ibtn { width: 26px; height: 26px; margin: 0 5px 1px 4px; display: grid; place-items: center; }
.er { margin-bottom: 1px; }
.raised { border: 1px solid #b4b4b4; border-radius: 3px; background: linear-gradient(#fafafa, #dcdcdc); }
.dlg-body a { color: #2a76c6; text-decoration: underline; }
.switch-link { height: 16px; line-height: 16px; text-align: right; padding-right: 15px; }
.switch-link a { outline: 1px dotted #aaa; outline-offset: -2px; }
.html-row { display: flex; align-items: flex-start; margin-top: 249px; }
.html-row label { width: 99px; padding: 3px 19px 0 0; text-align: right; height: 27px; }
.check { width: 17px; height: 17px; border: 1px solid #aaa; border-radius: 3px; background: #f6f6f6; }
.cond-link { display: block; margin-left: 98px; letter-spacing: -.05px; }
.attach { display: flex; align-items: center; margin: 3px 0 0 18px; color: #2e3436; }
.attach i { border: 4px solid transparent; border-left: 5px solid #222; border-right: 0; margin-right: 7px; }
.attach b { font-size: 12.300px; }
.dlg-foot { height: 65px; border-top: 1px solid #cecece; display: flex; padding-left: 8px; color: #2e3436; }
.tool { width: 51px; padding-top: 12px; display: flex; flex-direction: column; align-items: center; line-height: 24px; }
.off { color: #8f9293; }
.btns { display: flex; padding-top: 15px; margin-left: 16px; }
.btns button { width: 109px; height: 34px; padding: 0 1px 1px 0; font: inherit; color: #3a3f41; border: 1px solid #b0b0b0; border-bottom-color: #8c8c8c; border-radius: 3px; background: linear-gradient(#ececeb, #d0d0cf); box-shadow: inset 0 1px #fff; }
.btns .gap { margin-left: 7px; }
.btns .primary { color: #fff; border-color: #1c5ba0; background: linear-gradient(#4a90d9, #2a76c6); box-shadow: inset 0 1px #7ab0e8; }
.dlg-grip { height: 4px; border-top: 1px solid #55585b; display: flex; gap: 1px; background: #55585b; }
.dlg-grip i { flex: 1; background: #e8e8e8; }
.dlg-grip i:first-child, .dlg-grip i:last-child { flex: 0 0 25px; }
.cursor { position: absolute; left: 580px; top: 173px; }
.tooltip { position: absolute; left: 548px; top: 191px; width: 65px; height: 45px; line-height: 45px; border-radius: 2px; background: #000; color: #e6e6e6; text-align: center; }
```
